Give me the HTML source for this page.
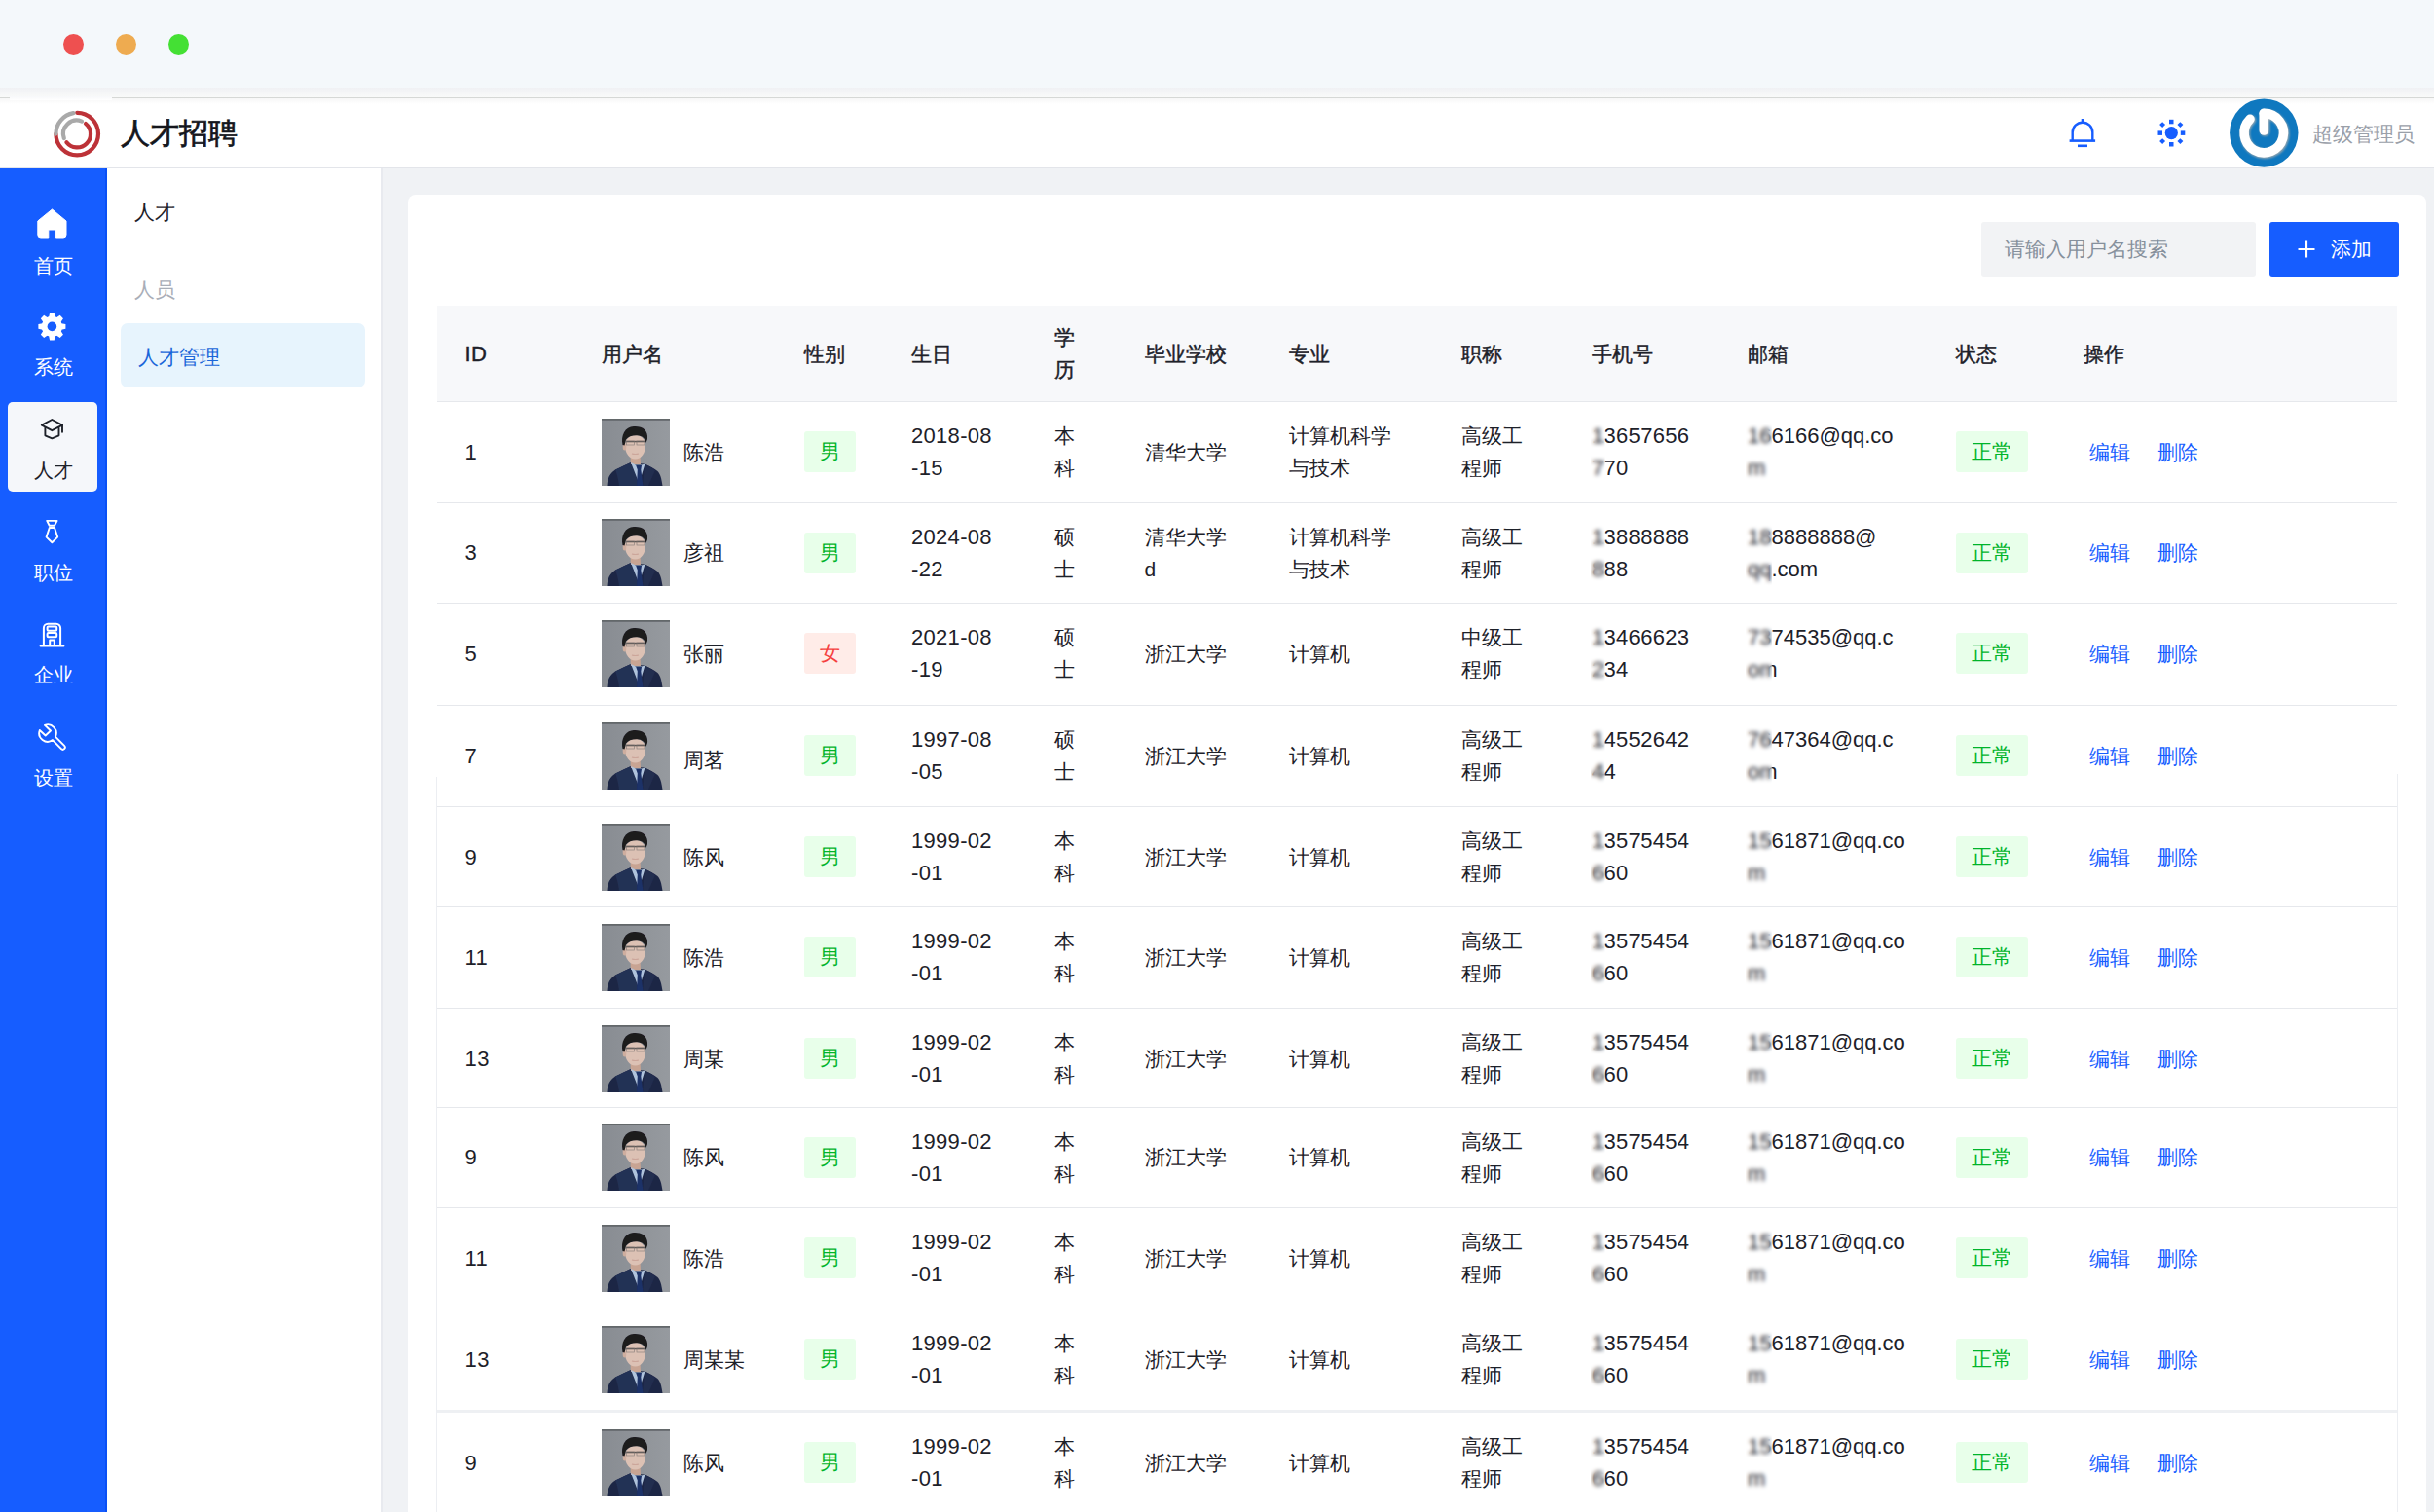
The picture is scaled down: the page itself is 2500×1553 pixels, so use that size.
<!DOCTYPE html>
<html><head><meta charset="utf-8"><title>人才招聘</title>
<style>
*{box-sizing:border-box;margin:0;padding:0}
html,body{width:2500px;height:1553px;overflow:hidden}
body{position:relative;background:#f0f2f5;font-family:"Liberation Sans",sans-serif;color:#1d2129;font-size:21px;line-height:33px}
.abs{position:absolute}
#titlebar{left:0;top:0;width:2500px;height:92px;background:#f4f8fb}
#tshadow{left:0;top:90px;width:2500px;height:10px;background:linear-gradient(#f0f1f4,#f9faf9)}
.dot{position:absolute;top:35px;width:21px;height:21px;border-radius:50%}
#header{left:0;top:100px;width:2500px;height:73px;background:#fff;border-top:1.5px solid #d6d8d6;border-bottom:1px solid #e3e5ea;background-image:linear-gradient(#f7f7f7,#fff 6px)}
#hgap{left:10px;top:99px;width:105px;height:4px;background:linear-gradient(#f7f8fa,#fff)}
#brand{left:124px;top:119px;font-size:30px;line-height:36px;font-weight:400;-webkit-text-stroke:0.7px #14161c;color:#14161c}
#side{left:0;top:173px;width:110px;height:1380px;background:#165dff;border-right:2px solid #0a50f5}
.mi{position:absolute;left:0;width:110px;text-align:center;color:#fff;font-size:20px;line-height:24px}
.mi svg{position:absolute}
#active{left:8px;top:413px;width:92px;height:92px;background:#f5f7fa;border-radius:5px}
#sub{left:110px;top:173px;width:283px;height:1380px;background:#fff;border-right:2px solid #e8eaef}
#card{left:419px;top:200px;width:2073px;height:1400px;background:#fff;border-radius:8px}
#search{left:2035px;top:228px;width:282px;height:56px;background:#f2f3f5;border-radius:3px;color:#86909c;padding-left:24px;line-height:56px}
#addbtn{left:2331px;top:228px;width:133px;height:56px;background:#165dff;border-radius:3px;color:#fff;line-height:56px}
#table{left:449px;top:314px;width:2013px;height:1300px}
#thead{position:absolute;left:0;top:0;width:2013px;height:99.3px;background:#f7f8fa;border-bottom:1px solid #e6e8ec}
#thead .c{font-weight:400;-webkit-text-stroke:0.45px #1d2129}
.row{position:absolute;left:0;width:2013px}
.ln{position:absolute;left:0;width:2013px;height:1px;background:#e6e8ec}
.c{position:absolute;top:0;height:100%;display:flex;align-items:center;white-space:nowrap}
.lat{font-size:22px;letter-spacing:0.3px}
.em{font-size:22px;letter-spacing:0}
.av{display:block;margin-right:14px}
.tag{display:inline-block;height:42px;line-height:42px;padding:0 16px;border-radius:3px}
.tag.g{background:#e8ffea;color:#00b42a}
.tag.r{background:#ffece8;color:#f53f3f}
.bl{position:absolute;backdrop-filter:blur(2px)}
.lk{color:#165dff;margin-left:6px;margin-right:22px}
</style></head><body>
<svg width="0" height="0" style="position:absolute"><defs><linearGradient id="bgg" x1="0" x2="1"><stop offset="0" stop-color="#888c92"/><stop offset="1" stop-color="#969a9f"/></linearGradient><filter id="avb" x="0" y="0" width="100%" height="100%"><feGaussianBlur stdDeviation="0.45"/></filter></defs><symbol id="avs" viewBox="0 0 70 69"><rect width="70" height="69" fill="url(#bgg)"/><g filter="url(#avb)"><rect width="70" height="1.8" fill="#63676b"/><path d="M5.5 69 C6 61 8.5 56 14 52.5 C20 49.5 25 47.5 30 45 L36 46 L44 46.5 C49 49 54 51 57.5 54 C60.5 57 61.5 62 62.5 69 Z" fill="#1d2745"/><path d="M14 52.5 C20 49.5 25 47.5 30 45 L37 63 L36 69 L18 69 C17 62 16 57 14 52.5 Z" fill="#243055"/><path d="M44 46.5 C49 49 53 51 55 53 L48 69 L42 69 Z" fill="#222d50"/><path d="M29.5 38 L39.5 38 L40 47 L30 47 Z" fill="#c8a493"/><path d="M30 45 L35 47.5 L41 47.5 L44.5 46.5 L41 58 L37 63 Z" fill="#afc3dc"/><path d="M35.2 48 L41 48 L40.3 52.5 L42.5 69 L36 69 L36.8 52.5 Z" fill="#1d3068"/><path d="M24 28 C24 21 28.5 17 34.5 17 C40.5 17 45 21 45 28 C45 35.5 40.5 41.5 34.5 41.5 C28.5 41.5 24 35.5 24 28 Z" fill="#dcc1b4"/><ellipse cx="23.5" cy="29" rx="1.8" ry="3.5" fill="#cfae9f"/><path d="M21.5 27 C19.5 17 24 8.5 33 8 C42 7.5 48 12 47 21 L45.5 25 C44.5 20 41.5 17.5 36.5 17.2 C31.5 17 27 18.5 25 21.5 L23.5 27.5 Z" fill="#1b1a1e"/><path d="M24.5 22.8 H44.5 V24.3 H24.5 Z" fill="#5e5856"/><rect x="25.5" y="23" width="8" height="4" fill="none" stroke="#7a7371" stroke-width="0.7" opacity="0.8"/><rect x="36" y="23" width="8" height="4" fill="none" stroke="#7a7371" stroke-width="0.7" opacity="0.8"/><path d="M31 36 Q34.5 37 38 36" stroke="#c49a8e" stroke-width="1.2" fill="none" opacity="0.7"/></g></symbol></svg>
<div id="titlebar" class="abs"></div>
<div id="tshadow" class="abs"></div>
<div class="dot" style="left:65px;background:#ee5050"></div>
<div class="dot" style="left:119px;background:#eeab50"></div>
<div class="dot" style="left:173px;background:#44e034"></div>
<div id="header" class="abs"></div><div id="hgap" class="abs"></div>
<svg class="abs" style="left:50px;top:109px" width="58" height="58" viewBox="50 109 58 58"><defs><filter id="lb" x="-10%" y="-10%" width="120%" height="120%"><feGaussianBlur stdDeviation="0.75"/></filter></defs>
<g fill="none" stroke-width="4.2" stroke-linecap="round" filter="url(#lb)">
<path d="M79.2 115.8 A21.8 21.8 0 1 1 57.4 137.6" stroke="#bd3337"/>
<path d="M57.4 137.6 A21.8 21.8 0 0 1 75.4 116.1" stroke="#a9a9a9"/>
<path d="M88 127 A13.8 13.8 0 1 1 68.4 146.2" stroke="#bd3337"/>
<path d="M65.8 142 A13.8 13.8 0 0 1 84 124.6" stroke="#a9a9a9"/>
</g></svg>
<div id="brand" class="abs">人才招聘</div>
<svg class="abs" style="left:2122px;top:118px" width="34" height="36" viewBox="2122 118 34 36">
<g fill="none" stroke="#165dff" stroke-width="2.4">
<path d="M2128.7 144.5 V136 A10.3 10.3 0 0 1 2149.3 136 V144.5"/>
<path d="M2125.6 144.6 H2152.1" stroke-width="2.6"/>
<path d="M2134 149.8 H2144" stroke-width="2.6"/>
<path d="M2139 122 V126" stroke-width="2.6"/>
</g></svg>
<svg class="abs" style="left:2214px;top:120px" width="34" height="34" viewBox="2214 120 34 34">
<g fill="#165dff"><circle cx="2230.3" cy="136.6" r="6.6"/>
<rect x="2228" y="122.8" width="4.5" height="4.5"/><rect x="2228" y="146" width="4.5" height="4.5"/>
<rect x="2216.5" y="134.4" width="4.5" height="4.5"/><rect x="2239.8" y="134.4" width="4.5" height="4.5"/>
<rect x="2219" y="126" width="4.2" height="4.2" transform="rotate(45 2221.1 128.1)"/>
<rect x="2237.3" y="126" width="4.2" height="4.2" transform="rotate(45 2239.4 128.1)"/>
<rect x="2219" y="143" width="4.2" height="4.2" transform="rotate(45 2221.1 145.1)"/>
<rect x="2237.3" y="143" width="4.2" height="4.2" transform="rotate(45 2239.4 145.1)"/>
</g></svg>
<svg class="abs" style="left:2288px;top:99px" width="75" height="75" viewBox="2288 99 75 75">
<circle cx="2325.3" cy="136.6" r="35.2" fill="#0f78bf"/>
<defs><filter id="pw" x="-20%" y="-20%" width="140%" height="140%"><feGaussianBlur stdDeviation="0.8"/></filter></defs>
<g fill="none" stroke-linecap="round"><g stroke="#b9b4ae" stroke-width="10" filter="url(#pw)" opacity="0.8"><path d="M2326.3 135 V117.5"/><path d="M2326.3 117.5 A20.2 20.2 0 1 1 2312 123.3"/></g>
<g stroke="#fff" stroke-width="9.6"><path d="M2325.3 134 V116.5"/><path d="M2325.3 116.4 A20.2 20.2 0 1 1 2311 122.3"/></g></g>
</svg>
<div class="abs" style="left:2375px;top:121px;font-size:21px;line-height:33px;color:#9aa0a9">超级管理员</div>
<div id="side" class="abs"></div>
<div id="active" class="abs"></div>
<svg class="abs" style="left:36px;top:212px" width="35" height="36" viewBox="36 212 35 36">
<path d="M53.5 215 L68 227 V241 A3 3 0 0 1 65 244 H57.4 V236 H49.8 V244 H41.8 A3 3 0 0 1 38.8 241 V227 Z" fill="#fff" stroke="#fff" stroke-width="1" stroke-linejoin="round"/>
</svg>
<div class="mi" style="top:261px">首页</div>
<svg class="abs" style="left:36px;top:319px" width="35" height="34" viewBox="36 319 35 34">
<g fill="#fff"><path d="M50.16 325.73 L51.06 321.39 L55.74 321.39 L56.64 325.73 L57.95 326.27 L61.65 323.84 L64.96 327.15 L62.53 330.85 L63.07 332.16 L67.41 333.06 L67.41 337.74 L63.07 338.64 L62.53 339.95 L64.96 343.65 L61.65 346.96 L57.95 344.53 L56.64 345.07 L55.74 349.41 L51.06 349.41 L50.16 345.07 L48.85 344.53 L45.15 346.96 L41.84 343.65 L44.27 339.95 L43.73 338.64 L39.39 337.74 L39.39 333.06 L43.73 332.16 L44.27 330.85 L41.84 327.15 L45.15 323.84 L48.85 326.27 Z"/><circle cx="53.4" cy="335.4" r="10.6"/></g>
<circle cx="53.4" cy="335.4" r="4.8" fill="#165dff"/></svg>
<div class="mi" style="top:365px">系统</div>
<svg class="abs" style="left:38px;top:426px" width="30" height="28" viewBox="38 426 30 28">
<g fill="none" stroke="#1d2129" stroke-width="1.9" stroke-linejoin="round" stroke-linecap="round">
<path d="M42.8 436.7 L53.4 431 L64 436.7 L53.4 442.2 Z"/>
<path d="M46.4 439.5 V447.3 L53.4 450.3 L60.5 447.3 V439.5"/>
<path d="M64 436.7 V443.8"/>
</g></svg>
<div class="mi" style="top:471px;color:#1d2129">人才</div>
<svg class="abs" style="left:44px;top:532px" width="19" height="29" viewBox="44 532 19 29">
<g fill="none" stroke="#fff" stroke-width="1.9" stroke-linejoin="round" stroke-linecap="round">
<path d="M48.2 534.9 H58.6 L56 539.7 H50.7 Z"/>
<path d="M50.8 542 H56 L59.2 551.6 L53.4 557.3 L47.6 551.6 Z"/>
</g></svg>
<div class="mi" style="top:576px">职位</div>
<svg class="abs" style="left:39px;top:637px" width="29" height="30" viewBox="39 637 29 30">
<g fill="none" stroke="#fff" stroke-width="2" stroke-linejoin="round" stroke-linecap="round">
<path d="M44.9 663 V645 A4.3 4.3 0 0 1 49.2 640.7 H57.8 A4.3 4.3 0 0 1 62.1 645 V663"/>
<path d="M41.6 663.5 H65.4"/>
<rect x="48.6" y="643.6" width="9.6" height="4.2" rx="1"/>
<rect x="48.6" y="650" width="9.6" height="4.2" rx="1"/>
<path d="M51.2 663 V657.6 H55.8 V663"/>
</g></svg>
<div class="mi" style="top:681px">企业</div>
<svg class="abs" style="left:37px;top:741px" width="33" height="33" viewBox="37 741 33 33">
<g fill="none" stroke="#fff" stroke-width="1.9" stroke-linejoin="round" stroke-linecap="round">
<path d="M46 744.8 L52 750.5 L46.7 755.5 L40.8 750 A8.7 8.7 0 0 0 54 760.1 L62.9 769.1 A2.25 2.25 0 0 0 66.1 765.9 L56.9 756.7 A8.7 8.7 0 0 0 46 744.8 Z"/>
</g></svg>
<div class="mi" style="top:787px">设置</div>
<div id="sub" class="abs"></div>
<div class="abs" style="left:138px;top:201px;color:#1d2129">人才</div>
<div class="abs" style="left:138px;top:281px;color:#a9aeb8">人员</div>
<div class="abs" style="left:124px;top:332px;width:251px;height:66px;background:#e7f4fd;border-radius:7px"></div>
<div class="abs" style="left:142px;top:350px;color:#1a66d9;font-size:21px">人才管理</div>
<div id="card" class="abs"></div>
<div id="search" class="abs">请输入用户名搜索</div>
<div id="addbtn" class="abs"><svg class="abs" style="left:29px;top:19px" width="18" height="18" viewBox="0 0 18 18"><path d="M9 0.5 V17.5 M0.5 9 H17.5" stroke="#fff" stroke-width="2.2"/></svg><span class="abs" style="left:63px;top:0">添加</span></div>
<div id="table" class="abs">
<div id="thead"><div class="c lat" style="left:28.600000000000023px">ID</div><div class="c " style="left:169px">用户名</div><div class="c " style="left:377px">性别</div><div class="c " style="left:487px">生日</div><div class="c " style="left:634px">学<br>历</div><div class="c " style="left:726.5px">毕业学校</div><div class="c " style="left:875.3px">专业</div><div class="c " style="left:1052px">职称</div><div class="c " style="left:1186px">手机号</div><div class="c " style="left:1346px">邮箱</div><div class="c " style="left:1560px">状态</div><div class="c " style="left:1691px">操作</div></div>
<div class="row" style="top:99.30000000000001px;height:102px"><div class="c lat" style="left:28.600000000000023px">1</div><div class="c " style="left:169px"><svg class="av" viewBox="0 0 70 69" width="70" height="69"><use href="#avs"/></svg><span class="nm">陈浩</span></div><div class="c " style="left:377px"><span class="tag g">男</span></div><div class="c lat" style="left:487px">2018-08<br>-15</div><div class="c " style="left:634px">本<br>科</div><div class="c " style="left:726.5px">清华大学</div><div class="c " style="left:875.3px">计算机科学<br>与技术</div><div class="c " style="left:1052px">高级工<br>程师</div><div class="c lat" style="left:1186px">13657656<br>770</div><div class="c em" style="left:1346px">166166@qq.co<br>m</div><div class="c " style="left:1560px"><span class="tag g st">正常</span></div><div class="c " style="left:1691px"><span class="lk">编辑</span><span class="lk">删除</span></div></div><div class="row" style="top:202.5px;height:102px"><div class="c lat" style="left:28.600000000000023px">3</div><div class="c " style="left:169px"><svg class="av" viewBox="0 0 70 69" width="70" height="69"><use href="#avs"/></svg><span class="nm">彦祖</span></div><div class="c " style="left:377px"><span class="tag g">男</span></div><div class="c lat" style="left:487px">2024-08<br>-22</div><div class="c " style="left:634px">硕<br>士</div><div class="c " style="left:726.5px">清华大学<br>d</div><div class="c " style="left:875.3px">计算机科学<br>与技术</div><div class="c " style="left:1052px">高级工<br>程师</div><div class="c lat" style="left:1186px">13888888<br>888</div><div class="c em" style="left:1346px">188888888@<br>qq.com</div><div class="c " style="left:1560px"><span class="tag g st">正常</span></div><div class="c " style="left:1691px"><span class="lk">编辑</span><span class="lk">删除</span></div></div><div class="row" style="top:306px;height:102px"><div class="c lat" style="left:28.600000000000023px">5</div><div class="c " style="left:169px"><svg class="av" viewBox="0 0 70 69" width="70" height="69"><use href="#avs"/></svg><span class="nm">张丽</span></div><div class="c " style="left:377px"><span class="tag r">女</span></div><div class="c lat" style="left:487px">2021-08<br>-19</div><div class="c " style="left:634px">硕<br>士</div><div class="c " style="left:726.5px">浙江大学</div><div class="c " style="left:875.3px">计算机</div><div class="c " style="left:1052px">中级工<br>程师</div><div class="c lat" style="left:1186px">13466623<br>234</div><div class="c em" style="left:1346px">7374535@qq.c<br>om</div><div class="c " style="left:1560px"><span class="tag g st">正常</span></div><div class="c " style="left:1691px"><span class="lk">编辑</span><span class="lk">删除</span></div></div><div class="row" style="top:411.20000000000005px;height:102px"><div class="c lat" style="left:28.600000000000023px">7</div><div class="c " style="left:169px"><svg class="av" viewBox="0 0 70 69" width="70" height="69"><use href="#avs"/></svg><span class="nm" style="position:relative;top:4px">周茗</span></div><div class="c " style="left:377px"><span class="tag g">男</span></div><div class="c lat" style="left:487px">1997-08<br>-05</div><div class="c " style="left:634px">硕<br>士</div><div class="c " style="left:726.5px">浙江大学</div><div class="c " style="left:875.3px">计算机</div><div class="c " style="left:1052px">高级工<br>程师</div><div class="c lat" style="left:1186px">14552642<br>44</div><div class="c em" style="left:1346px">7647364@qq.c<br>om</div><div class="c " style="left:1560px"><span class="tag g st">正常</span></div><div class="c " style="left:1691px"><span class="lk">编辑</span><span class="lk">删除</span></div></div><div class="row" style="top:515px;height:102px"><div class="c lat" style="left:28.600000000000023px">9</div><div class="c " style="left:169px"><svg class="av" viewBox="0 0 70 69" width="70" height="69"><use href="#avs"/></svg><span class="nm">陈风</span></div><div class="c " style="left:377px"><span class="tag g">男</span></div><div class="c lat" style="left:487px">1999-02<br>-01</div><div class="c " style="left:634px">本<br>科</div><div class="c " style="left:726.5px">浙江大学</div><div class="c " style="left:875.3px">计算机</div><div class="c " style="left:1052px">高级工<br>程师</div><div class="c lat" style="left:1186px">13575454<br>660</div><div class="c em" style="left:1346px">1561871@qq.co<br>m</div><div class="c " style="left:1560px"><span class="tag g st">正常</span></div><div class="c " style="left:1691px"><span class="lk">编辑</span><span class="lk">删除</span></div></div><div class="row" style="top:618.2px;height:102px"><div class="c lat" style="left:28.600000000000023px">11</div><div class="c " style="left:169px"><svg class="av" viewBox="0 0 70 69" width="70" height="69"><use href="#avs"/></svg><span class="nm">陈浩</span></div><div class="c " style="left:377px"><span class="tag g">男</span></div><div class="c lat" style="left:487px">1999-02<br>-01</div><div class="c " style="left:634px">本<br>科</div><div class="c " style="left:726.5px">浙江大学</div><div class="c " style="left:875.3px">计算机</div><div class="c " style="left:1052px">高级工<br>程师</div><div class="c lat" style="left:1186px">13575454<br>660</div><div class="c em" style="left:1346px">1561871@qq.co<br>m</div><div class="c " style="left:1560px"><span class="tag g st">正常</span></div><div class="c " style="left:1691px"><span class="lk">编辑</span><span class="lk">删除</span></div></div><div class="row" style="top:722.3px;height:102px"><div class="c lat" style="left:28.600000000000023px">13</div><div class="c " style="left:169px"><svg class="av" viewBox="0 0 70 69" width="70" height="69"><use href="#avs"/></svg><span class="nm">周某</span></div><div class="c " style="left:377px"><span class="tag g">男</span></div><div class="c lat" style="left:487px">1999-02<br>-01</div><div class="c " style="left:634px">本<br>科</div><div class="c " style="left:726.5px">浙江大学</div><div class="c " style="left:875.3px">计算机</div><div class="c " style="left:1052px">高级工<br>程师</div><div class="c lat" style="left:1186px">13575454<br>660</div><div class="c em" style="left:1346px">1561871@qq.co<br>m</div><div class="c " style="left:1560px"><span class="tag g st">正常</span></div><div class="c " style="left:1691px"><span class="lk">编辑</span><span class="lk">删除</span></div></div><div class="row" style="top:823.5px;height:102px"><div class="c lat" style="left:28.600000000000023px">9</div><div class="c " style="left:169px"><svg class="av" viewBox="0 0 70 69" width="70" height="69"><use href="#avs"/></svg><span class="nm">陈风</span></div><div class="c " style="left:377px"><span class="tag g">男</span></div><div class="c lat" style="left:487px">1999-02<br>-01</div><div class="c " style="left:634px">本<br>科</div><div class="c " style="left:726.5px">浙江大学</div><div class="c " style="left:875.3px">计算机</div><div class="c " style="left:1052px">高级工<br>程师</div><div class="c lat" style="left:1186px">13575454<br>660</div><div class="c em" style="left:1346px">1561871@qq.co<br>m</div><div class="c " style="left:1560px"><span class="tag g st">正常</span></div><div class="c " style="left:1691px"><span class="lk">编辑</span><span class="lk">删除</span></div></div><div class="row" style="top:927.0999999999999px;height:102px"><div class="c lat" style="left:28.600000000000023px">11</div><div class="c " style="left:169px"><svg class="av" viewBox="0 0 70 69" width="70" height="69"><use href="#avs"/></svg><span class="nm">陈浩</span></div><div class="c " style="left:377px"><span class="tag g">男</span></div><div class="c lat" style="left:487px">1999-02<br>-01</div><div class="c " style="left:634px">本<br>科</div><div class="c " style="left:726.5px">浙江大学</div><div class="c " style="left:875.3px">计算机</div><div class="c " style="left:1052px">高级工<br>程师</div><div class="c lat" style="left:1186px">13575454<br>660</div><div class="c em" style="left:1346px">1561871@qq.co<br>m</div><div class="c " style="left:1560px"><span class="tag g st">正常</span></div><div class="c " style="left:1691px"><span class="lk">编辑</span><span class="lk">删除</span></div></div><div class="row" style="top:1031.3px;height:102px"><div class="c lat" style="left:28.600000000000023px">13</div><div class="c " style="left:169px"><svg class="av" viewBox="0 0 70 69" width="70" height="69"><use href="#avs"/></svg><span class="nm">周某某</span></div><div class="c " style="left:377px"><span class="tag g">男</span></div><div class="c lat" style="left:487px">1999-02<br>-01</div><div class="c " style="left:634px">本<br>科</div><div class="c " style="left:726.5px">浙江大学</div><div class="c " style="left:875.3px">计算机</div><div class="c " style="left:1052px">高级工<br>程师</div><div class="c lat" style="left:1186px">13575454<br>660</div><div class="c em" style="left:1346px">1561871@qq.co<br>m</div><div class="c " style="left:1560px"><span class="tag g st">正常</span></div><div class="c " style="left:1691px"><span class="lk">编辑</span><span class="lk">删除</span></div></div><div class="row" style="top:1137.4px;height:102px"><div class="c lat" style="left:28.600000000000023px">9</div><div class="c " style="left:169px"><svg class="av" viewBox="0 0 70 69" width="70" height="69"><use href="#avs"/></svg><span class="nm">陈风</span></div><div class="c " style="left:377px"><span class="tag g">男</span></div><div class="c lat" style="left:487px">1999-02<br>-01</div><div class="c " style="left:634px">本<br>科</div><div class="c " style="left:726.5px">浙江大学</div><div class="c " style="left:875.3px">计算机</div><div class="c " style="left:1052px">高级工<br>程师</div><div class="c lat" style="left:1186px">13575454<br>660</div><div class="c em" style="left:1346px">1561871@qq.co<br>m</div><div class="c " style="left:1560px"><span class="tag g st">正常</span></div><div class="c " style="left:1691px"><span class="lk">编辑</span><span class="lk">删除</span></div></div><div class="ln" style="top:201.5px"></div><div class="ln" style="top:305px"></div><div class="ln" style="top:410.20000000000005px"></div><div class="ln" style="top:514px"></div><div class="ln" style="top:617.2px"></div><div class="ln" style="top:721.3px"></div><div class="ln" style="top:822.5px"></div><div class="ln" style="top:926.0999999999999px"></div><div class="ln" style="top:1030.3px"></div>
</div>
<div class="abs" style="left:448px;top:798px;width:1px;height:755px;background:#eceef2"></div><div class="abs" style="left:2462px;top:795px;width:1px;height:758px;background:#eceef2"></div>
<div class="abs" style="left:449px;top:1448.4px;width:2013px;height:3px;background:#eef0f3"></div>
<div class="bl" style="left:1634px;top:431.3px;width:15px;height:70px"></div><div class="bl" style="left:1793px;top:431.3px;width:27px;height:70px"></div><div class="bl" style="left:1634px;top:534.5px;width:15px;height:70px"></div><div class="bl" style="left:1793px;top:534.5px;width:27px;height:70px"></div><div class="bl" style="left:1634px;top:638px;width:15px;height:70px"></div><div class="bl" style="left:1793px;top:638px;width:27px;height:70px"></div><div class="bl" style="left:1634px;top:743.2px;width:15px;height:70px"></div><div class="bl" style="left:1793px;top:743.2px;width:27px;height:70px"></div><div class="bl" style="left:1634px;top:847px;width:15px;height:70px"></div><div class="bl" style="left:1793px;top:847px;width:27px;height:70px"></div><div class="bl" style="left:1634px;top:950.2px;width:15px;height:70px"></div><div class="bl" style="left:1793px;top:950.2px;width:27px;height:70px"></div><div class="bl" style="left:1634px;top:1054.3px;width:15px;height:70px"></div><div class="bl" style="left:1793px;top:1054.3px;width:27px;height:70px"></div><div class="bl" style="left:1634px;top:1155.5px;width:15px;height:70px"></div><div class="bl" style="left:1793px;top:1155.5px;width:27px;height:70px"></div><div class="bl" style="left:1634px;top:1259.1px;width:15px;height:70px"></div><div class="bl" style="left:1793px;top:1259.1px;width:27px;height:70px"></div><div class="bl" style="left:1634px;top:1363.3px;width:15px;height:70px"></div><div class="bl" style="left:1793px;top:1363.3px;width:27px;height:70px"></div><div class="bl" style="left:1634px;top:1469.4px;width:15px;height:70px"></div><div class="bl" style="left:1793px;top:1469.4px;width:27px;height:70px"></div>

</body></html>
